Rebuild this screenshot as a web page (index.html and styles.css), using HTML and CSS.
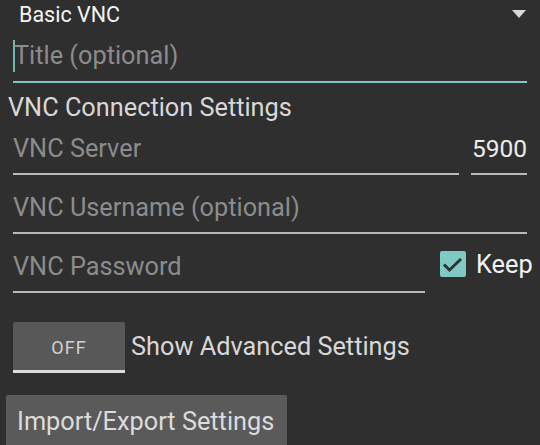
FILE: index.html
```html
<!DOCTYPE html>
<html>
<head>
<meta charset="utf-8">
<link rel="stylesheet" href="styles.css">
</head>
<body>
<div class="screen">
  <div class="spinner">
    <span class="spinner-text">Basic VNC</span>
    <svg class="spinner-arrow" width="14" height="8" viewBox="0 0 14 8"><polygon points="0,0 14,0 7,8" fill="#d8d8d8"/></svg>
  </div>
  <div class="field field-title"><span class="caret"></span><span class="hint">Title (optional)</span></div>
  <div class="section">VNC Connection Settings</div>
  <div class="row row-server">
    <div class="field grow"><span class="hint">VNC Server</span></div>
    <div class="field port"><span class="value">5900</span></div>
  </div>
  <div class="row">
    <div class="field grow"><span class="hint">VNC Username (optional)</span></div>
  </div>
  <div class="row row-pass">
    <div class="field pass"><span class="hint">VNC Password</span></div>
    <label class="check">
      <span class="box"><svg width="26" height="26" viewBox="0 0 26 26"><polyline points="4,13.5 9.5,19 21,8" fill="none" stroke="#2a3534" stroke-width="3"/></svg></span>
      <span class="check-text">Keep</span>
    </label>
  </div>
  <div class="toggle-row">
    <div class="toggle">OFF</div>
    <span class="toggle-label">Show Advanced Settings</span>
  </div>
  <div class="button">Import/Export Settings</div>
</div>
</body>
</html>
```

FILE: styles.css
```css
html, body {
  margin: 0;
  padding: 0;
  background: #2f2f2f;
  overflow: hidden;
}
.screen {
  width: 540px;
  height: 445px;
  overflow: hidden;
  font-family: Roboto, "Liberation Sans", sans-serif;
  background: #2f2f2f;
}
.spinner {
  height: 30px;
  display: flex;
  align-items: flex-start;
  padding-left: 19px;
  padding-right: 14px;
}
.spinner-text {
  font-size: 21.5px;
  line-height: 28px;
  margin-top: 1px;
  color: #f4f4f4;
  flex: 1;
}
.spinner-arrow {
  margin-top: 10px;
}
.field {
  box-sizing: border-box;
  border-bottom: 2px solid #b9b9b9;
  font-size: 25.3px;
  line-height: 28px;
  padding-top: 19px;
  padding-bottom: 10px;
  white-space: nowrap;
}
.field-title {
  margin-left: 13px;
  width: 514px;
  padding-top: 10px;
  padding-bottom: 9px;
  border-bottom: 2px solid #7fc6bd;
  display: flex;
  align-items: center;
}
.caret {
  display: inline-block;
  flex: none;
  width: 2px;
  height: 32px;
  background: #6fb8ae;
  margin-right: -1px;
}
.hint {
  color: #8c8c8c;
}
.value {
  color: #ececec;
  font-size: 24.5px;
}
.section {
  font-size: 25.3px;
  line-height: 28px;
  padding-top: 11px;
  padding-left: 8px;
  color: #d8d8d8;
  margin-bottom: -6px;
}
.row {
  display: flex;
  align-items: center;
  padding-left: 13px;
  padding-right: 13px;
}
.row-pass {
  padding-right: 0;
}
.grow {
  flex: 1;
}
.port {
  flex: none;
  width: 56px;
  margin-left: 12px;
  text-align: right;
}
.pass {
  flex: none;
  width: 412px;
}
.check {
  display: flex;
  align-items: center;
  margin-left: 15px;
  margin-top: 1px;
}
.box {
  flex: none;
  width: 26px;
  height: 26px;
  background: #7fcbc3;
  border-radius: 2px;
  display: flex;
}
.check-text {
  font-size: 25.3px;
  line-height: 28px;
  color: #f2f2f2;
  margin-left: 10px;
  margin-top: 2px;
}
.toggle-row {
  display: flex;
  align-items: center;
  margin-top: 29px;
  padding-left: 13px;
}
.toggle {
  box-sizing: border-box;
  width: 112px;
  height: 51px;
  background: #585858;
  border-bottom: 3px solid #dcdcdc;
  border-radius: 2px 2px 0 0;
  color: #d2d2d2;
  font-size: 18px;
  letter-spacing: 1px;
  display: flex;
  align-items: center;
  justify-content: center;
  padding-top: 2px;
}
.toggle-label {
  font-size: 25.3px;
  line-height: 28px;
  color: #d8d8d8;
  margin-left: 6px;
  margin-top: -1px;
}
.button {
  margin-top: 22px;
  margin-left: 6px;
  width: 281px;
  height: 60px;
  box-sizing: border-box;
  background: #5a5a5a;
  border-radius: 2px;
  color: #dcdcdc;
  font-size: 25.3px;
  line-height: 28px;
  padding-top: 13px;
  padding-left: 11px;
  white-space: nowrap;
}
```
